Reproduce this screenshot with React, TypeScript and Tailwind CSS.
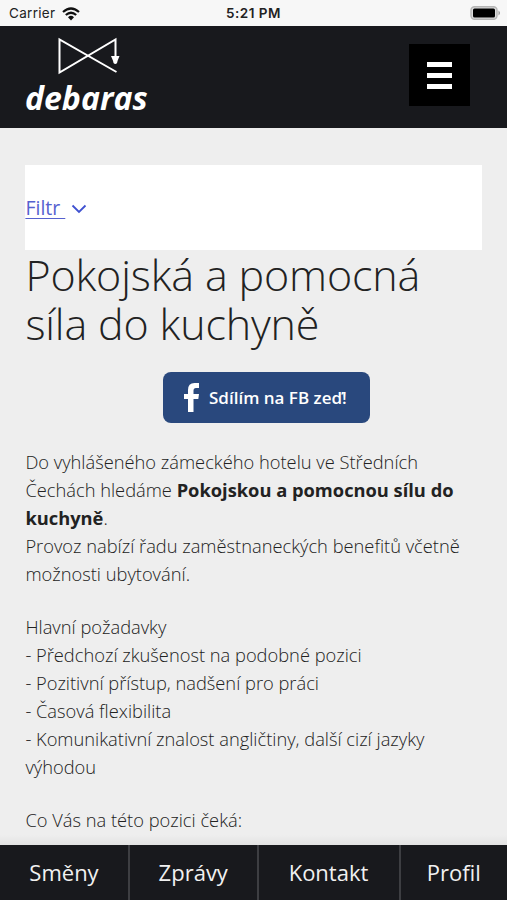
import React from "react";

const requirements = [
  "- Předchozí zkušenost na podobné pozici",
  "- Pozitivní přístup, nadšení pro práci",
  "- Časová flexibilita",
  "- Komunikativní znalost angličtiny, další cizí jazyky",
  "výhodou",
];

function StatusBar() {
  return (
    <div className="grid h-[26px] shrink-0 grid-cols-3 items-center bg-[#f7f7f7] pl-[9px] pr-[6px] font-['Inter',sans-serif] text-[13.5px] text-[#222]">
      <div className="flex items-center gap-[6px] pt-px">
        <span className="w-[47px] tracking-[0.300px]">Carrier</span>
        <svg width="18" height="14" viewBox="0 0 18 14">
          <path d="M1 5Q9-2 17 5M3.800 8Q9 3.500 14.200 8" fill="none" stroke="#111" strokeWidth="2.200" />
          <path d="M6 10.200Q9 7.500 12 10.200L9 13.500Z" fill="#111" />
        </svg>
      </div>
      <div className="-ml-[3px] pt-px text-center font-semibold tracking-[0.500px]">5:21 PM</div>
      <div className="flex justify-end">
        <svg width="31" height="14" viewBox="0 0 31 14">
          <rect x="1" y=".7" width="26" height="12.600" rx="3.500" fill="#ddd" stroke="#b5b5b5" strokeWidth="1.400" />
          <rect x="3" y="2.500" width="22" height="9" rx="1.500" />
          <path d="M28.500 4.500q3 2.500 0 5z" fill="#999" />
        </svg>
      </div>
    </div>
  );
}

export default function App() {
  return (
    <div className="flex h-[900px] w-[507px] flex-col overflow-hidden bg-[#eeeeee] font-['Open_Sans',sans-serif] text-[#222]">
      <StatusBar />
      <header className="flex h-[102px] shrink-0 items-start justify-between bg-[#18191d] pl-[25px] pr-[37px]">
        <div className="flex w-[125px] flex-col pt-[11px] text-white">
          <svg className="ml-8" width="64" height="38" viewBox="0 0 64 38">
            <path d="M58.500 20V2.500L2.500 35.500V2.500L59.500 35" fill="none" stroke="#fff" strokeWidth="2" />
            <path d="M54 19h8.500L60.500 24q-.2 3-2.200 3t-2.200-3z" fill="#fff" />
          </svg>
          <span className="pt-px text-[32px] font-bold italic leading-[43px]">debaras</span>
        </div>
        <button className="mt-[18px] flex h-[62px] w-[61px] flex-col items-center justify-center gap-[6px] bg-black">
          <i className="h-[5px] w-[25px] bg-white" />
          <i className="h-[5px] w-[25px] bg-white" />
          <i className="h-[5px] w-[25px] bg-white" />
        </button>
      </header>
      <main className="min-h-0 flex-1 overflow-hidden pl-[25.4px] pr-[24.6px] pt-[37px] text-[18.3px] font-light leading-[28px]">
        <div className="flex h-[85px] items-center gap-[6px] bg-white text-[19.5px] text-[#5561cf]">
          <span className="whitespace-pre pt-px font-normal underline decoration-1 underline-offset-[3px]">Filtr </span>
          <svg className="mt-[2px]" width="16" height="10" viewBox="0 0 16 10">
            <path d="M1.500 1.500L8 8l6.500-6.500" fill="none" stroke="#3f51d0" strokeWidth="1.800" />
          </svg>
        </div>
        <h1 className="text-[43px] font-light leading-[49px] tracking-[-0.150px]">Pokojská a pomocná<br />síla do kuchyně</h1>
        <button className="ml-[137.6px] mt-[24px] flex h-[51px] w-[207px] items-center rounded-[8px] bg-[#29487d] pl-[21px] text-[17px] font-semibold text-white">
          <svg className="mr-[10px]" width="15" height="31" viewBox="0 0 15 31">
            <path d="M4 30V17H0v-5h4V8Q4 1 10.500 1H15v5h-3q-2.500 0-2.500 2.500V12H15l-.7 5H9.500v13z" fill="#fff" />
          </svg>
          <span className="whitespace-nowrap">Sdílím na FB zeď!</span>
        </button>
        <p className="mt-[25px] whitespace-nowrap">
          Do vyhlášeného zámeckého hotelu ve Středních<br />
          Čechách hledáme <b className="font-bold">Pokojskou a pomocnou sílu do<br />kuchyně</b>.<br />
          Provoz nabízí řadu zaměstnaneckých benefitů včetně<br />
          možnosti ubytování.
        </p>
        <div className="mt-[25px] whitespace-nowrap">
          <p>Hlavní požadavky</p>
          {requirements.map((line) => <p key={line}>{line}</p>)}
        </div>
        <p className="mt-[25px]">Co Vás na této pozici čeká:</p>
      </main>
      <div className="-mt-[10px] h-[10px] shrink-0 bg-linear-to-b from-transparent to-black/5" />
      <nav className="grid h-[55px] shrink-0 grid-cols-[130px_128.5px_142px_106.5px] divide-x-2 divide-[#3d3e42] bg-[#18191d] text-[22px] text-[#f1f1f1]">
        <a className="flex items-center justify-center">Směny</a>
        <a className="flex items-center justify-center">Zprávy</a>
        <a className="flex items-center justify-center">Kontakt</a>
        <a className="flex items-center justify-center">Profil</a>
      </nav>
    </div>
  );
}
